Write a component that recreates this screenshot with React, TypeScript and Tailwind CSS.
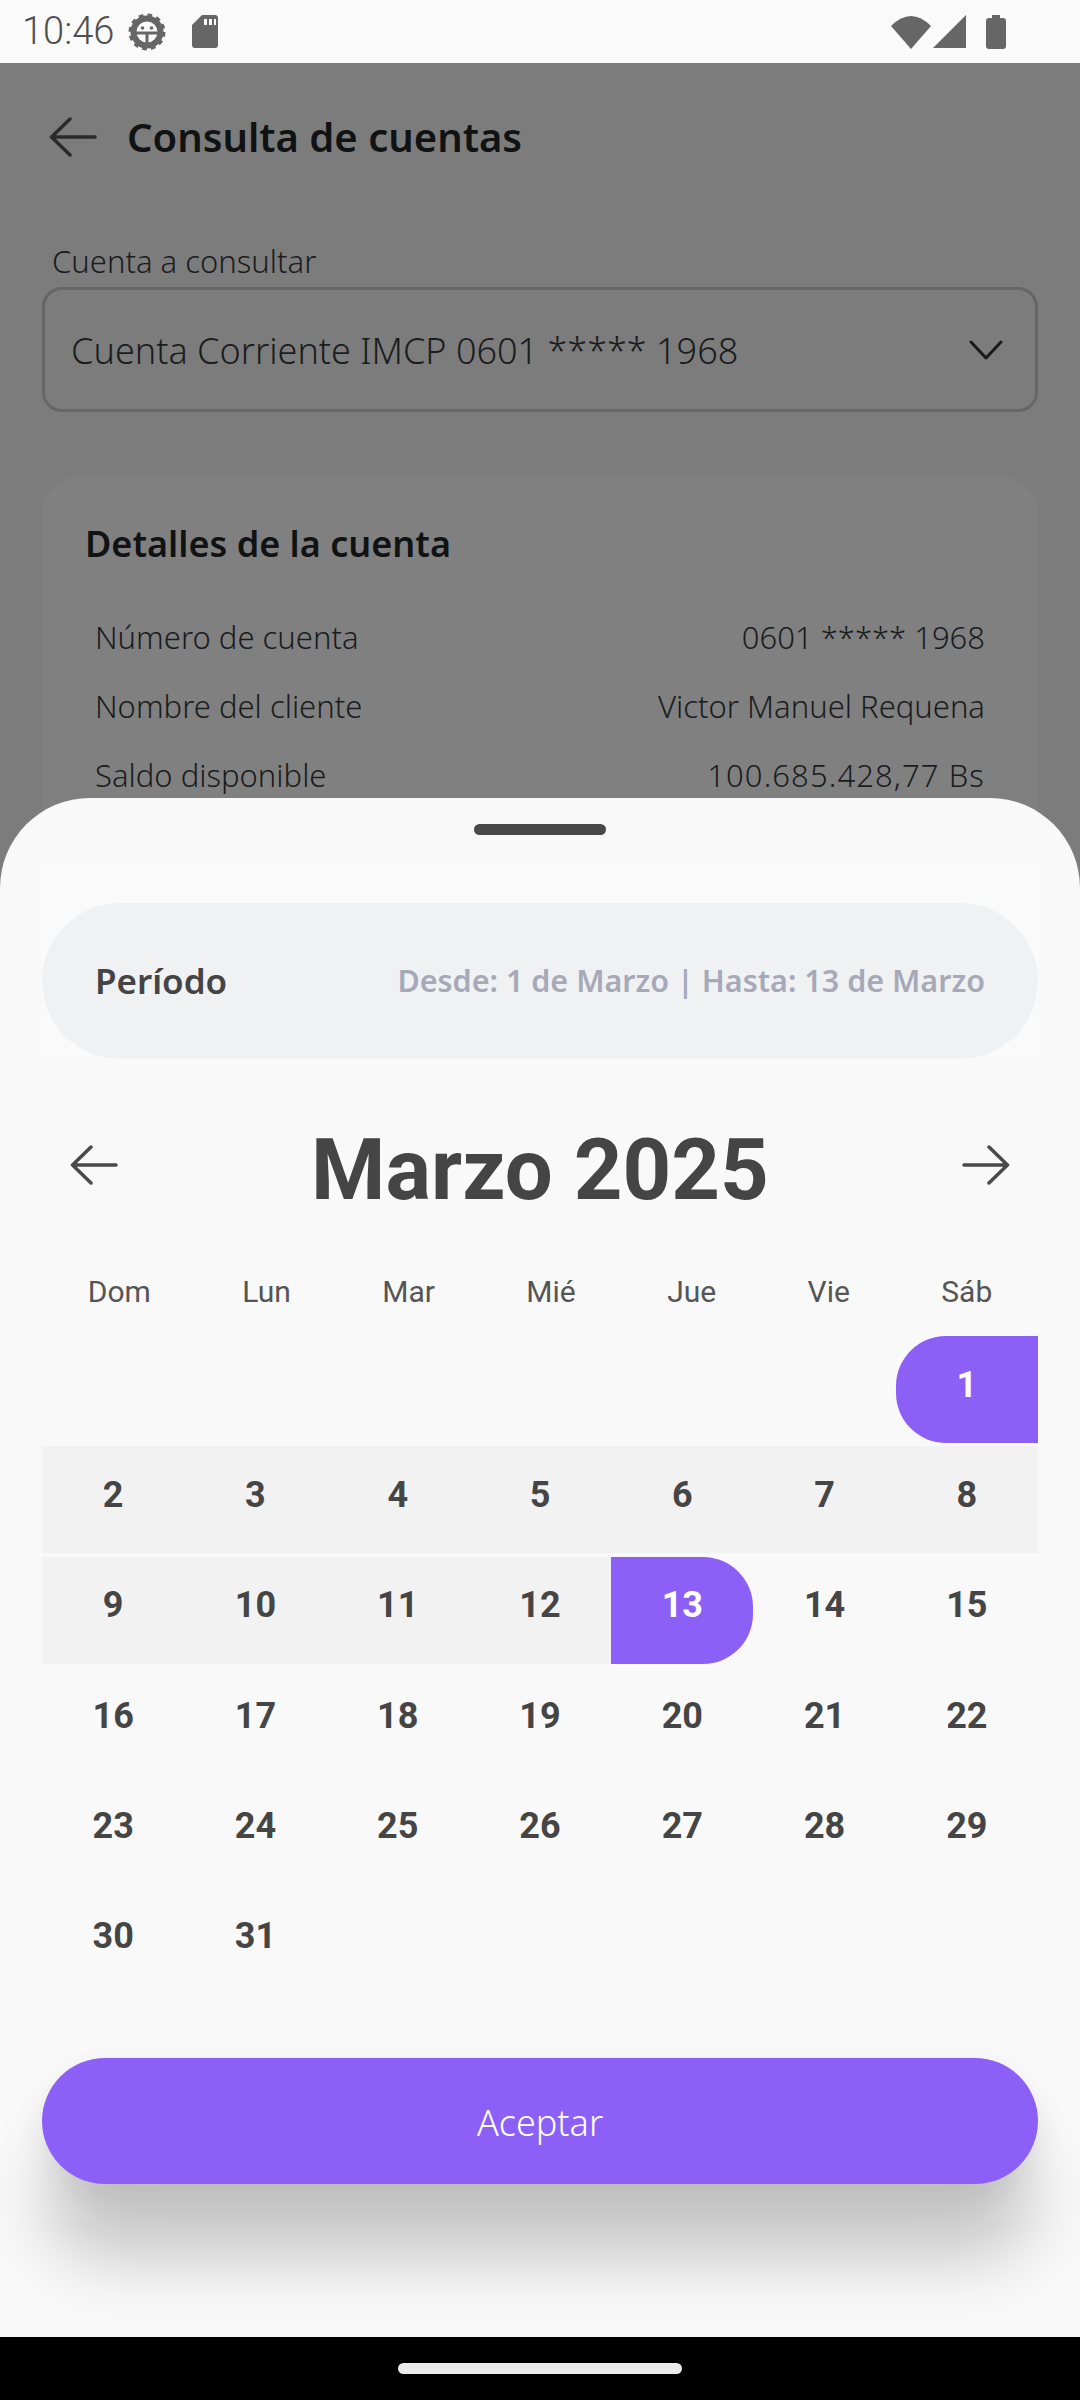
const plex = 'font-["Noto_Sans",sans-serif]';

const weekdays = ['Dom', 'Lun', 'Mar', 'Mié', 'Jue', 'Vie', 'Sáb'];
const days = Array.from({ length: 31 }, (_, i) => i + 1);

const details = [
  { label: 'Número de cuenta', value: '0601 ***** 1968', valueClass: '' },
  { label: 'Nombre del cliente', value: 'Victor Manuel Requena', valueClass: '' },
  { label: 'Saldo disponible', value: '100.685.428,77 Bs', valueClass: 'tracking-[1.100px]' },
];

const ArrowIcon = ({ flip = false, color, className = '' }: { flip?: boolean; color: string; className?: string }) => (
  <svg width="48" height="40" viewBox="0 0 48 40" fill="none" className={`${flip ? 'rotate-180' : ''} ${className}`}>
    <path
      d="M46 20H3M21 2 2.500 20 21 38"
      stroke={color}
      strokeWidth="3.500"
      strokeLinecap="round"
      strokeLinejoin="round"
    />
  </svg>
);

const DebugGear = () => (
  <svg width="38" height="38" viewBox="0 0 38 38" fill="none">
    <circle cx="19" cy="19" r="13.500" stroke="#666" strokeWidth="6" />
    <circle cx="19" cy="19" r="16" stroke="#666" strokeWidth="5" strokeDasharray="4.400 3.980" />
    <path d="M6 20h26M19 20v12" stroke="#666" strokeWidth="3" />
    <circle cx="14.500" cy="15" r="1.800" fill="#666" />
    <circle cx="23.500" cy="15" r="1.800" fill="#666" />
  </svg>
);

const SdCard = () => (
  <svg width="26" height="33" viewBox="0 0 26 33">
    <path
      d="M10 0h13a3 3 0 0 1 3 3v27a3 3 0 0 1-3 3H3a3 3 0 0 1-3-3V10z"
      fill="#666"
    />
    <path d="M12 4h3v6h-3zM17 4h3v6h-3zM22 4h2v6h-2z" fill="#fafafa" />
  </svg>
);

const StatusBar = () => (
  <div className="flex h-[63px] shrink-0 items-center bg-[#fafafa] pl-[22px] pr-[74px]">
    <span className='font-["Roboto",sans-serif] text-[38px] font-light text-[#4f4f4f]'>10:46</span>
    <div className="ml-[14px] flex items-center gap-[26px]">
      <DebugGear />
      <SdCard />
    </div>
    <div className="ml-auto flex items-center">
      <svg width="40" height="34" viewBox="0 0 40 34">
        <path d="M0 11Q20-9 40 11L20 34z" fill="#666" />
      </svg>
      <svg width="34" height="34" viewBox="0 0 34 34" className="ml-[2px]">
        <path d="M33 0v33H0z" fill="#666" />
      </svg>
      <svg width="20" height="34" viewBox="0 0 20 34" className="ml-[19px]">
        <path d="M6 0h8v3h3a3 3 0 0 1 3 3v25a3 3 0 0 1-3 3H3a3 3 0 0 1-3-3V6a3 3 0 0 1 3-3h3z" fill="#666" />
      </svg>
    </div>
  </div>
);

const BackgroundPage = () => (
  <div className={`flex flex-1 flex-col overflow-hidden bg-[#7c7c7c] px-[42px] ${plex}`}>
    <div className="mt-[52px] flex items-center pl-[7px]">
      <ArrowIcon color="#2a2a2a" />
      <h1 className="ml-[30px] text-[40px] leading-[44px] font-semibold text-[#101214]">Consulta de cuentas</h1>
    </div>
    <label className="mt-[82px] ml-[10px] text-[31px] leading-[40px] font-light text-[#1a1c1e]">Cuenta a consultar</label>
    <div className="mt-[6px] flex h-[125px] items-center justify-between rounded-[20px] border-[3px] border-[#666] pr-[32px] pl-[26px]">
      <span className="pt-[3px] text-[36px] font-light text-[#1a1c1e]">Cuenta Corriente IMCP 0601 ***** 1968</span>
      <svg width="34" height="20" viewBox="0 0 34 20" fill="none">
        <path d="M2 2 17 18 32 2" stroke="#1a1a1a" strokeWidth="3" strokeLinecap="round" strokeLinejoin="round" />
      </svg>
    </div>
    <div className="mt-[63px] h-[500px] rounded-[40px] bg-[#808080] px-[43px] pt-[47px]">
      <h2 className="text-[36px] leading-[44px] font-semibold text-[#101214]">Detalles de la cuenta</h2>
      <div className="mt-[51px] flex flex-col gap-[29px] px-[10px]">
        {details.map((row) => (
          <div key={row.label} className="flex items-center justify-between text-[31px] leading-[40px] font-light text-[#1a1c1e]">
            <span>{row.label}</span>
            <span className={row.valueClass}>{row.value}</span>
          </div>
        ))}
      </div>
    </div>
  </div>
);

const DayCell = ({ day }: { day: number }) => {
  let tone = 'text-[#454545]';
  if (day === 1) tone = 'rounded-l-[50px] bg-[#8c5ff7] text-white';
  else if (day === 13) tone = 'rounded-r-[50px] bg-[#8c5ff7] text-white';
  else if (day < 13) tone = 'bg-[#f2f2f2] text-[#454545]';
  return (
    <div className={`flex items-center justify-center pb-[10px] text-[36px] font-bold ${tone}`}>{day}</div>
  );
};

const Calendar = () => (
  <div className='font-["Roboto",sans-serif]'>
    <div className="mt-[63px] flex h-[96px] items-start justify-between px-[28px]">
      <ArrowIcon color="#4a4a4a" className="mt-[23px]" />
      <span className="text-[85px] leading-[96px] font-bold text-[#454545]">Marzo 2025</span>
      <ArrowIcon color="#4a4a4a" className="mt-[23px]" flip />
    </div>
    <div className="mt-[56px] flex justify-around text-[30px] leading-[36px] text-[#555]">
      {weekdays.map((name) => (
        <span key={name}>{name}</span>
      ))}
    </div>
    <div className="mt-[26px] grid grid-cols-7 auto-rows-[107px] gap-y-[3.400px]">
      <div className="col-span-6" />
      {days.map((day) => (
        <DayCell key={day} day={day} />
      ))}
    </div>
  </div>
);

const DateSheet = () => (
  <div className="absolute inset-x-0 top-[798px] bottom-[63px] overflow-hidden rounded-t-[90px] bg-[#f9f9f9] px-[42px]">
    <div className="mx-auto mt-[26px] h-[11px] w-[132px] rounded-full bg-[#484848]" />
    <div className="mt-[25px] bg-[#fafafa] pt-[43px]">
      <div className={`flex h-[156px] items-center justify-between rounded-[78px] bg-[#f0f1f3] px-[53px] ${plex}`}>
        <span className="text-[35px] font-semibold text-[#444]">Período</span>
        <span className="text-[30.500px] font-semibold text-[#a7a9b9]">Desde: 1 de Marzo | Hasta: 13 de Marzo</span>
      </div>
    </div>
    <Calendar />
    <button className={`mt-[63px] h-[126px] w-full rounded-full bg-[#8c5ff7] pt-[4px] text-[36px] font-light text-white shadow-[0_76px_70px_-4px_rgba(0,0,0,0.21),0_10px_30px_0_rgba(0,0,0,0.08)] ${plex}`}>
      Aceptar
    </button>
  </div>
);

const App = () => (
  <div className="relative flex h-[2400px] w-[1080px] flex-col overflow-hidden">
    <StatusBar />
    <BackgroundPage />
    <div className="flex h-[63px] shrink-0 items-start justify-center bg-black pt-[26px]">
      <div className="h-[11px] w-[284px] rounded-full bg-[#ebebeb]" />
    </div>
    <DateSheet />
  </div>
);

export default App;
